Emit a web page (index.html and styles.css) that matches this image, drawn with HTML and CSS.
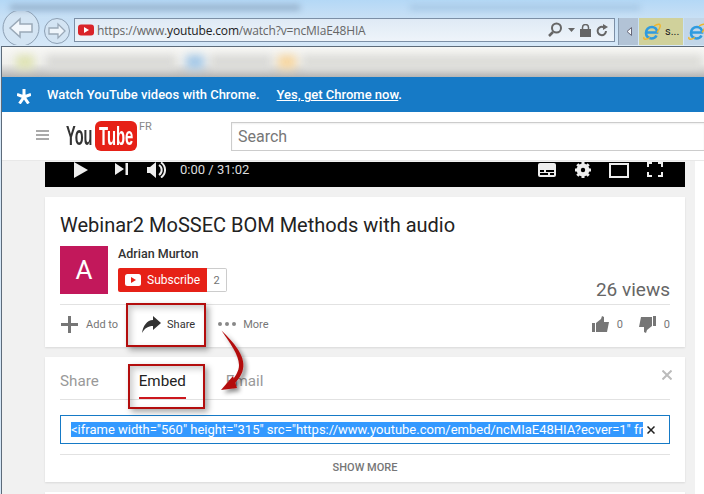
FILE: index.html
```html
<!DOCTYPE html>
<html>
<head>
    <title>Webinar2 MoSSEC BOM Methods with audio</title>
    <link rel="stylesheet" href="styles.css">
</head>
<body>
    <div class="titlebar"><div class="titlebar-blur"></div><div class="titlebar-blur blur-right"></div></div>
    <div class="toolbar">
        <svg class="back" width="40" height="34" viewBox="0 0 40 34">
            <circle cx="20" cy="17" r="18" fill="#d3e4f3" stroke="#8c9fb3"/>
            <path d="M9 17 L19 8 V13 H31 V21 H19 V26 Z" fill="#f2f7fc" stroke="#9aa9b8" stroke-width="1.5"/>
        </svg>
        <svg class="forward" width="28" height="28" viewBox="0 0 28 28">
            <circle cx="14" cy="14" r="12.5" fill="#d3e4f3" stroke="#8c9fb3"/>
            <path d="M22 14 L15 7 V11 H6 V17 H15 V21 Z" fill="#eef5fb" stroke="#9aa9b8" stroke-width="1.3"/>
        </svg>
        <div class="address">
            <svg width="16" height="12" viewBox="0 0 16 12">
                <rect width="16" height="11" y="0.5" rx="3" fill="#d9242a"/>
                <path d="M6 3 L11 6 L6 9 Z" fill="#fff"/>
            </svg>
            <span class="url">https://www.<b>youtube.com</b>/watch?v=ncMIaE48HIA</span>
            <svg class="addr-icon" width="16" height="16" viewBox="0 0 16 16">
                <circle cx="9.5" cy="6" r="4.5" fill="none" stroke="#666" stroke-width="2"/>
                <path d="M6 10 L2 14" stroke="#666" stroke-width="2.5"/>
            </svg>
            <svg class="addr-icon" width="7" height="4" viewBox="0 0 7 4"><path d="M0 0 H7 L3.5 4 Z" fill="#666"/></svg>
            <svg class="addr-icon" width="11" height="13" viewBox="0 0 11 13">
                <rect y="5" width="11" height="8" fill="#666"/>
                <path d="M2.5 6 V3.5 a3 3 0 0 1 6 0 V6" fill="none" stroke="#666" stroke-width="1.5"/>
            </svg>
            <svg class="addr-icon" width="12" height="13" viewBox="0 0 12 13">
                <path d="M10 7 a4.2 4.2 0 1 1 -2 -3.6" fill="none" stroke="#666" stroke-width="2"/>
                <path d="M7 0 L12 3 L7 6 Z" fill="#666"/>
            </svg>
        </div>
        <div class="tab-arrow"><svg width="6" height="9" viewBox="0 0 6 9"><path d="M5.500 0.500 L1 4.500 L5.500 8.500 Z" fill="#f5f8fb" stroke="#667"/></svg></div>
        <div class="tab tab-active">
            <svg class="ie-icon" width="18" height="18" viewBox="0 0 18 18">
                <path d="M3 9.500 H14 C14 6 12 4 9 4 C5.500 4 3 6.500 3 10 C3 13.500 5.500 15.500 8.500 15.500 C11 15.500 12.500 14.500 13.500 12.500" fill="none" stroke="#2f9bdf" stroke-width="2.600"/>
                <path d="M1 14 C0 17 3 17 7 14.500 M11 3 C15 0.500 18 0.500 17 4 C16.500 6 15 8 14 9.500" fill="none" stroke="#f0b52c" stroke-width="1.400"/>
            </svg>
            <span class="tab-text">s...</span>
        </div>
        <div class="tab tab-next">
            <svg class="ie-icon" width="18" height="18" viewBox="0 0 18 18">
                <path d="M3 9.500 H14 C14 6 12 4 9 4 C5.500 4 3 6.500 3 10 C3 13.500 5.500 15.500 8.500 15.500 C11 15.500 12.500 14.500 13.500 12.500" fill="none" stroke="#2f9bdf" stroke-width="2.600"/>
                <path d="M1 14 C0 17 3 17 7 14.500 M11 3 C15 0.500 18 0.500 17 4 C16.500 6 15 8 14 9.500" fill="none" stroke="#f0b52c" stroke-width="1.400"/>
            </svg>
        </div>
    </div>

    <div class="page">
        <div class="favbar"><div class="favbar-blur"><i class="f1"></i><i class="f2"></i><i class="f3"></i><i class="f4"></i><i class="f5"></i><i class="f6"></i></div></div>
        <div class="promo">
            <svg class="promo-star" width="14" height="15" viewBox="0 0 14 15">
                <path d="M7 8 V0 M7 8 L0 5.500 M7 8 L14 5.500 M7 8 L2.500 14.500 M7 8 L11.500 14.500" stroke="#fff" stroke-width="3"/>
            </svg>
            <span class="promo-text">Watch YouTube videos with Chrome.</span>
            <span class="promo-link"><u>Yes, get Chrome now</u>.</span>
        </div>
        <div class="masthead">
            <div class="burger"><i></i><i></i><i></i></div>
            <div class="logo">
                <span class="logo-you">You</span><span class="logo-tube"><span>Tube</span></span><span class="logo-fr">FR</span>
            </div>
            <div class="search">Search</div>
        </div>

        <div class="content">
            <div class="main">
                <div class="player">
                    <svg width="14" height="16" viewBox="0 0 14 16" class="pl-play"><path d="M0 0 L14 8 L0 16 Z" fill="#eee"/></svg>
                    <svg width="13" height="12" viewBox="0 0 13 12" class="pl-next"><path d="M0 0 L9 6 L0 12 Z M10.500 0 H13 V12 H10.500 Z" fill="#eee"/></svg>
                    <svg width="19" height="16" viewBox="0 0 19 16" class="pl-vol">
                        <path d="M0 5 H3 L9 0 V16 L3 11 H0 Z" fill="#eee"/>
                        <path d="M12 3 a6 6 0 0 1 0 10 M14 0.500 a9 9 0 0 1 0 15" fill="none" stroke="#eee" stroke-width="2"/>
                    </svg>
                    <span class="pl-time">0:00 / 31:02</span>
                    <span class="pl-space"></span>
                    <svg width="18" height="14" viewBox="0 0 18 14" class="pl-cc">
                        <path d="M2 0 H16 a2 2 0 0 1 2 2 V12 a2 2 0 0 1 -2 2 H2 a2 2 0 0 1 -2 -2 V2 a2 2 0 0 1 2 -2 Z" fill="#eee"/>
                        <path d="M2 7 H6 V9 H2 Z M8 7 H16 V9 H8 Z M2 10 H10 V12 H2 Z M12 10 H16 V12 H12 Z" fill="#000"/>
                    </svg>
                    <svg width="16" height="16" viewBox="0 0 16 16" class="pl-gear">
                        <circle cx="8" cy="8" r="4.500" fill="none" stroke="#eee" stroke-width="4"/>
                        <path d="M8 0 V16 M0 8 H16 M2.300 2.300 L13.700 13.700 M13.700 2.300 L2.300 13.700" stroke="#eee" stroke-width="3"/>
                        <circle cx="8" cy="8" r="2.200" fill="#000"/>
                    </svg>
                    <span class="pl-size"></span>
                    <svg width="16" height="15" viewBox="0 0 16 15" class="pl-full">
                        <path d="M1 5 V1 H5 M11 1 H15 V5 M15 10 V14 H11 M5 14 H1 V10" fill="none" stroke="#eee" stroke-width="2"/>
                    </svg>
                </div>

                <div class="card info">
                    <h1 class="title">Webinar2 MoSSEC BOM Methods with audio</h1>
                    <div class="owner">
                        <div class="avatar">A</div>
                        <div class="owner-info">
                            <div class="owner-name">Adrian Murton</div>
                            <div class="sub-row">
                                <span class="sub-btn">
                                    <svg width="16" height="12" viewBox="0 0 16 12">
                                        <rect width="16" height="12" rx="2.500" fill="#fff"/>
                                        <path d="M6 3 L11 6 L6 9 Z" fill="#e62117"/>
                                    </svg>
                                    Subscribe
                                </span><span class="sub-count">2</span>
                            </div>
                        </div>
                        <div class="views">26 views</div>
                    </div>
                    <div class="actions">
                        <span class="action act-add">
                            <svg width="17" height="17" viewBox="0 0 17 17"><path d="M7 0 H10 V7 H17 V10 H10 V17 H7 V10 H0 V7 H7 Z" fill="#767676"/></svg>
                            Add to
                        </span>
                        <span class="action act-share">
                            <svg width="19" height="17" viewBox="0 0 19 17"><path d="M11 0 L19 7 L11 14 V10 C6 10 3 12 0 17 C1 10 5 4 11 4 Z" fill="#333"/></svg>
                            Share
                        </span>
                        <span class="action act-more">
                            <span class="dots"><i></i><i></i><i></i></span>
                            More
                        </span>
                        <span class="action act-rate">
                            <svg width="17" height="17" viewBox="0 0 17 17"><path d="M0 7 H3 V16 H0 Z M4 7 L9 3 L10 0 L12 1 V6 H17 L15 16 H4 Z" fill="#767676"/></svg>
                            <span class="rate-num">0</span>
                        </span>
                        <span class="action act-rate">
                            <svg width="17" height="17" viewBox="0 0 17 17"><path d="M14 0 H17 V10 H14 Z M13 10 L8 14 L7 17 L5 16 V11 H0 L2 1 H13 Z" fill="#767676"/></svg>
                            <span class="rate-num">0</span>
                        </span>
                    </div>
                </div>

                <div class="card share">
                    <svg class="close" width="10" height="10" viewBox="0 0 10 10"><path d="M0.500 0.500 L9.500 9.500 M9.500 0.500 L0.500 9.500" stroke="#bbb" stroke-width="2"/></svg>
                    <div class="tabs">
                        <span class="share-tab">Share</span>
                        <span class="share-tab on">Embed</span>
                        <span class="share-tab">Email</span>
                    </div>
                    <div class="embed-box">
                        <span class="embed-code"><span class="sel">&lt;iframe width="560" height="315" src="https://www.youtube.com/embed/ncMIaE48HIA?ecver=1" fr</span></span>
                        <svg class="embed-x" width="8" height="8" viewBox="0 0 8 8"><path d="M0.500 0.500 L7.500 7.500 M7.500 0.500 L0.500 7.500" stroke="#222" stroke-width="1.500"/></svg>
                    </div>
                    <div class="show-more">SHOW MORE</div>
                </div>

                <div class="card next"></div>
            </div>
            <div class="side"></div>
        </div>
    </div>

    <!-- annotations drawn over the screenshot -->
    <div class="mark mark-share"></div>
    <div class="mark mark-embed"></div>
    <svg class="arrow" width="60" height="80" viewBox="0 0 60 80">
        <defs><filter id="sh" x="-30%" y="-30%" width="170%" height="170%"><feDropShadow dx="3" dy="3" stdDeviation="2" flood-color="#000" flood-opacity=".45"/></filter></defs>
        <g filter="url(#sh)">
            <path d="M11.500 5.500 C22 16 36 30 33 44 C32 50 28 55 24 59 L22 56 C26 50 29 46 29 40 C29 30 20 18 11.500 5.500 Z" fill="#b30d0d"/>
            <path d="M11 65 L23 51 L27 63 Z" fill="#b30d0d"/>
        </g>
    </svg>
</body>
</html>
```

FILE: styles.css
```css
html, body {
    margin: 0;
    height: 494px;
    overflow: hidden;
}

body {
    position: relative;
    font-family: Roboto, sans-serif;
    background: #d5e7f7;
}

.titlebar {
    height: 18px;
    display: flex;
    overflow: hidden;
    background: linear-gradient(#b4d8f6, #c8e0f5);
}

.titlebar-blur {
    height: 5px;
    width: 290px;
    margin: 5px 0 0 10px;
    background: #8ea9c4;
    filter: blur(3px);
}

.blur-right {
    width: 230px;
    margin-left: 110px;
    background: #a4c5e2;
}

.toolbar {
    height: 28px;
    display: flex;
    align-items: flex-start;
    background: linear-gradient(#c6dff5, #d6e8f8);
}

.back {
    margin: -7px 0 0 1px;
    flex: none;
}

.forward {
    margin: -1px 0 0 2px;
    flex: none;
}

.address {
    width: 530px;
    height: 22px;
    margin: 0 0 0 3px;
    padding: 0 6px 0 3px;
    border: 1px solid #7c8fa6;
    display: flex;
    align-items: center;
    background: linear-gradient(#dfeaf5, #eef4fa);
    flex: none;
}

.url {
    margin-left: 3px;
    font-family: "Open Sans", sans-serif;
    font-size: 12px;
    letter-spacing: -0.16px;
    color: #666;
    flex: 1;
    white-space: nowrap;
}

.url b {
    font-weight: normal;
    color: #222;
}

.addr-icon {
    margin-left: 5px;
}

.tab-arrow {
    width: 20px;
    height: 27px;
    margin-left: 3px;
    display: flex;
    align-items: center;
    justify-content: center;
    background: #b2c3d6;
    border-left: 1px solid #8a9cb0;
    box-sizing: border-box;
    flex: none;
}

.tab {
    width: 44px;
    height: 27px;
    margin-left: 1px;
    display: flex;
    align-items: center;
    padding-left: 4px;
    box-sizing: border-box;
    flex: none;
}

.tab-active {
    background: #d0d19b;
}

.tab-next {
    background: #c2d6e8;
}

.ie-icon {
    flex: none;
}

.tab-text {
    margin-left: 4px;
    font-size: 11px;
    color: #222;
}

.page {
    margin-left: 1px;
    height: 448px;
    background: #f1f1f1;
    border-top: 1px solid #5d6b7a;
    border-left: 1px solid #5d6b7a;
    box-sizing: border-box;
    overflow: hidden;
}

.favbar {
    height: 30px;
    overflow: hidden;
    background: linear-gradient(#f8f8f6 0%, #efefec 55%, #b4b4b4 100%);
}

.favbar-blur {
    height: 30px;
    display: flex;
    filter: blur(4px);
}

.favbar-blur i {
    height: 14px;
    margin-top: 8px;
}

.f1 { width: 18px; margin-left: 14px; background: #dfe3b4; }
.f2 { width: 130px; margin-left: 12px; background: #d9d9d6; }
.f3 { width: 18px; margin-left: 10px; background: #a4c8e8; }
.f4 { width: 62px; margin-left: 6px; background: #d9d9d6; }
.f5 { width: 18px; margin-left: 6px; background: #f7d6a0; }
.f6 { width: 400px; margin-left: 6px; background: #dcdcd8; }

.promo {
    height: 35px;
    display: flex;
    align-items: center;
    background: #167ac6;
    color: #fff;
    font-size: 13px;
    font-weight: 500;
}

.promo-star {
    margin: 3px 16px 0 15px;
    flex: none;
}

.promo-link {
    margin-left: 17px;
}

.masthead {
    height: 49px;
    display: flex;
    align-items: center;
    background: #fff;
    border-bottom: 1px solid #e8e8e8;
    box-sizing: border-box;
}

.burger {
    width: 13px;
    margin-left: 34px;
}

.burger i {
    display: block;
    height: 2px;
    margin-bottom: 2px;
    background: #aaa;
}

.logo {
    margin-left: 17px;
    width: 99px;
    height: 30px;
    display: flex;
    align-items: flex-start;
    flex: none;
}

.logo-you {
    width: 29px;
    font-family: "Liberation Sans", sans-serif;
    font-weight: bold;
    font-size: 28px;
    line-height: 30px;
    color: #333;
    transform: scaleX(.52);
    transform-origin: 0 50%;
}

.logo-tube {
    width: 42px;
    height: 30px;
    background: #e62117;
    border-radius: 6px;
    color: #fff;
    overflow: hidden;
}

.logo-tube span {
    display: block;
    font-family: "Liberation Sans", sans-serif;
    font-weight: bold;
    font-size: 26px;
    line-height: 30px;
    margin-left: 4px;
    transform: scaleX(.57);
    transform-origin: 0 50%;
}

.logo-fr {
    margin: 0 0 0 2px;
    font-size: 11px;
    line-height: 12px;
    color: #888;
}

.search {
    margin-left: 66px;
    flex: 1;
    height: 29px;
    line-height: 27px;
    padding-left: 6px;
    border: 1px solid #ccc;
    border-right: none;
    box-sizing: border-box;
    font-size: 16px;
    color: #777;
    box-shadow: inset 0 1px 2px #eee;
}

.content {
    display: flex;
    padding-left: 43px;
}

.main {
    width: 640px;
    flex: none;
}

.side {
    width: 9px;
    flex: none;
    margin-left: 10px;
    height: 340px;
    background: #fff;
}

.player {
    height: 25px;
    margin-top: 1px;
    display: flex;
    align-items: flex-start;
    background: #000;
    overflow: hidden;
}

.pl-play { margin: 0 0 0 29px; }
.pl-next { margin: 1px 0 0 27px; }
.pl-vol { margin: 0 0 0 19px; }

.pl-time {
    margin-left: 14px;
    font-size: 13px;
    line-height: 15px;
    color: #ddd;
}

.pl-space { flex: 1; }
.pl-cc { margin: 1px 0 0 0; }
.pl-gear { margin: 0 0 0 19px; }

.pl-size {
    width: 16px;
    height: 11px;
    margin: 1px 0 0 18px;
    border: 2px solid #eee;
}

.pl-full { margin: 0 22px 0 18px; }

.card {
    background: #fff;
    box-shadow: 0 1px 2px rgba(0, 0, 0, .1);
    margin-top: 10px;
    padding: 0 15px;
    position: relative;
}

.info {
    height: 150px;
}

.title {
    margin: 0;
    padding-top: 16px;
    height: 33px;
    font-size: 20px;
    line-height: 24px;
    font-weight: 400;
    color: #222;
    white-space: nowrap;
}

.owner {
    display: flex;
    height: 58px;
    border-bottom: 1px solid #e2e2e2;
}

.avatar {
    width: 48px;
    height: 48px;
    background: #c2185b;
    color: #fff;
    font-size: 26px;
    line-height: 48px;
    text-align: center;
}

.owner-info {
    margin-left: 10px;
}

.owner-name {
    font-size: 12.5px;
    font-weight: 500;
    line-height: 15px;
    color: #333;
}

.sub-row {
    margin-top: 7px;
    display: flex;
}

.sub-btn {
    width: 89px;
    height: 24px;
    display: flex;
    align-items: center;
    box-sizing: border-box;
    padding-left: 7px;
    background: #e62117;
    color: #fff;
    font-size: 12px;
    border-radius: 2px 0 0 2px;
}

.sub-btn svg {
    margin-right: 6px;
}

.sub-count {
    width: 20px;
    height: 24px;
    box-sizing: border-box;
    border: 1px solid #ccc;
    border-left: none;
    border-radius: 0 2px 2px 0;
    text-align: center;
    font-size: 11px;
    line-height: 24px;
    color: #737373;
}

.views {
    margin-left: auto;
    margin-top: 32px;
    font-size: 19px;
    line-height: 24px;
    color: #666;
}

.actions {
    height: 38px;
    display: flex;
    align-items: center;
    font-size: 11px;
    color: #767676;
}

.action {
    display: flex;
    align-items: center;
}

.act-add {
    margin-left: 1px;
}

.act-add svg {
    margin-right: 8px;
}

.act-share {
    margin-left: 24px;
    color: #333;
}

.act-share svg {
    margin-right: 6px;
}

.act-more {
    margin-left: 23px;
}

.dots {
    display: flex;
    margin-right: 4px;
}

.dots i {
    width: 4px;
    height: 4px;
    margin-right: 3px;
    border-radius: 50%;
    background: #888;
}

.act-rate {
    margin-left: 16px;
}

.act-more + .act-rate {
    margin-left: auto;
}

.rate-num {
    margin-left: 8px;
}

.share {
    height: 125px;
}

.close {
    position: absolute;
    right: 13px;
    top: 13px;
}

.tabs {
    height: 43px;
    display: flex;
    gap: 40px;
    border-bottom: 1px solid #e2e2e2;
    box-sizing: border-box;
}

.share-tab {
    margin-top: 14px;
    height: 28px;
    box-sizing: border-box;
    font-size: 15.2px;
    line-height: 20px;
    color: #999;
}

.share-tab.on {
    color: #222;
    border-bottom: 2px solid #cc181e;
}

.embed-box {
    margin-top: 15px;
    height: 29px;
    display: flex;
    align-items: center;
    box-sizing: border-box;
    padding-left: 10px;
    border: 1px solid #167ac6;
    font-size: 13px;
}

.embed-code {
    width: 572px;
    overflow: hidden;
    white-space: nowrap;
    flex: none;
}

.sel {
    background: #3399ff;
    color: #fff;
}

.embed-x {
    margin-left: 4px;
    flex: none;
}

.show-more {
    margin-top: 10px;
    padding-top: 6px;
    border-top: 1px solid #e2e2e2;
    text-align: center;
    font-size: 11px;
    font-weight: 500;
    line-height: 14px;
    color: #767676;
}

.next {
    height: 20px;
}

.mark {
    position: absolute;
    border: 2px solid #b30d0d;
    box-sizing: border-box;
    box-shadow: 3px 3px 6px rgba(0, 0, 0, .35), inset 3px 3px 6px rgba(0, 0, 0, .2);
}

.mark-share {
    left: 126px;
    top: 303px;
    width: 80px;
    height: 44px;
}

.mark-embed {
    left: 128px;
    top: 364px;
    width: 77px;
    height: 45px;
}

.arrow {
    position: absolute;
    left: 210px;
    top: 325px;
}
```
